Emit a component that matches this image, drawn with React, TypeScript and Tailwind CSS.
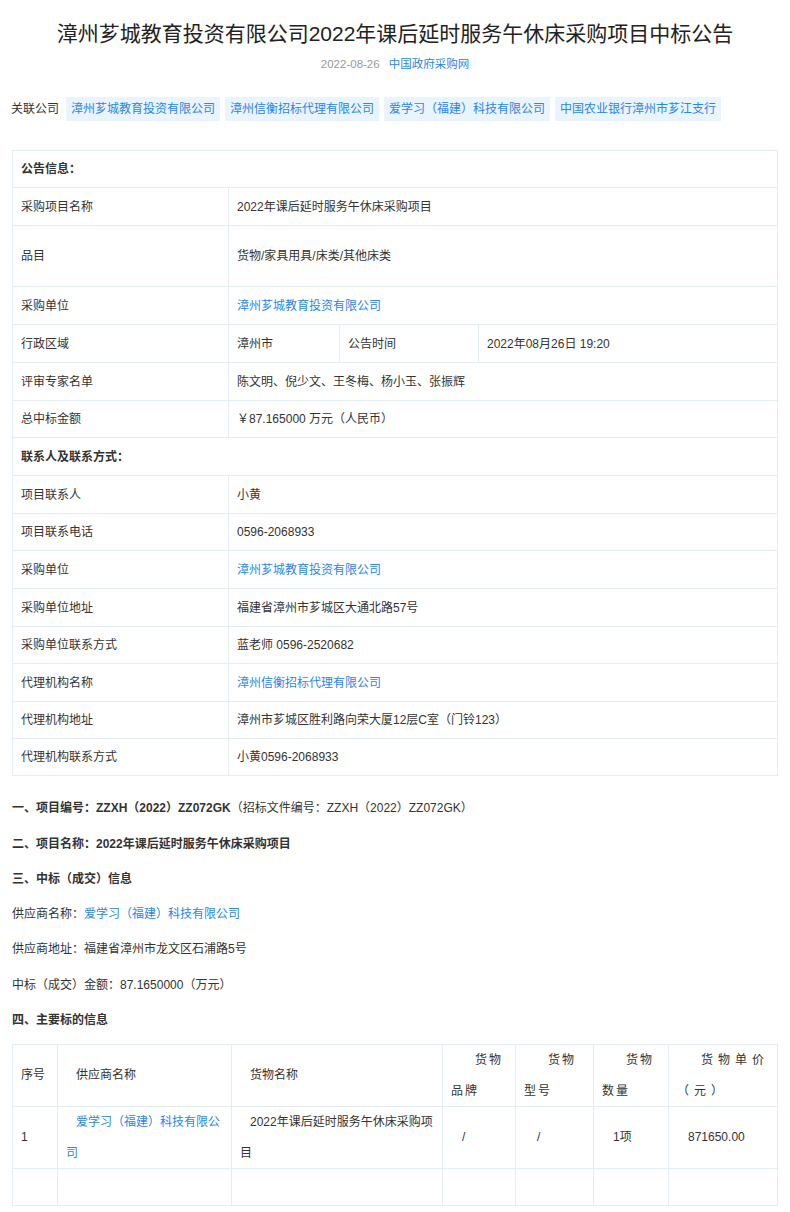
import React from "react";

const L = "text-[#2a86e8]";
const B = "border-[#e4eef2]";

function Row({ a, b, h = "h-[38px]", link = false }: { a: string; b: string; h?: string; link?: boolean }) {
  return (
    <div className={`flex ${h} border-t ${B}`}>
      <div className={`w-[216px] shrink-0 border-r ${B} flex items-center pl-[8px]`}>{a}</div>
      <div className={`flex-1 flex items-center pl-[8px] ${link ? L : ""}`}>{b}</div>
    </div>
  );
}

export default function App() {
  const font = { fontFamily: '"Liberation Sans","Noto Sans CJK SC",sans-serif' };
  const cols = ["w-[45px]", "w-[174px]", "w-[211px]", "w-[73px]", "w-[78px]", "w-[75px]", "flex-1"];
  return (
    <div className="w-[790px] bg-white text-[12px] text-[#333]" style={font}>
      <h1 className="text-[21px] text-[#222] text-center pt-[20px] leading-[28px]">漳州芗城教育投资有限公司2022年课后延时服务午休床采购项目中标公告</h1>
      <div className="text-center mt-[8px] text-[11.5px]">
        <span className="text-[#999]">2022-08-26</span>
        <span className={`ml-[9px] ${L}`}>中国政府采购网</span>
      </div>
      <div className="flex items-center mt-[24px] pl-[11px] gap-[5px]">
        <span className="mr-[2px]">关联公司</span>
        {["漳州芗城教育投资有限公司", "漳州信衡招标代理有限公司", "爱学习（福建）科技有限公司", "中国农业银行漳州市芗江支行"].map(t => (
          <span key={t} className={`bg-[#e9f4fd] ${L} h-[24px] px-[5px] flex items-center`}>{t}</span>
        ))}
      </div>
      <div className={`mx-[12px] mt-[29px] border ${B} border-t-0`}>
        <div className={`h-[37px] border-t ${B} flex items-center pl-[8px] font-bold`}>公告信息：</div>
        <Row a="采购项目名称" b="2022年课后延时服务午休床采购项目" />
        <Row a="品目" b="货物/家具用具/床类/其他床类" h="h-[61px]" />
        <Row a="采购单位" b="漳州芗城教育投资有限公司" link />
        <div className={`flex h-[38px] border-t ${B}`}>
          <div className={`w-[216px] shrink-0 border-r ${B} flex items-center pl-[8px]`}>行政区域</div>
          <div className={`w-[111px] border-r ${B} flex items-center pl-[8px]`}>漳州市</div>
          <div className={`w-[139px] border-r ${B} flex items-center pl-[8px]`}>公告时间</div>
          <div className="flex-1 flex items-center pl-[8px]">2022年08月26日 19:20</div>
        </div>
        <Row a="评审专家名单" b="陈文明、倪少文、王冬梅、杨小玉、张振辉" />
        <Row a="总中标金额" b="￥87.165000 万元（人民币）" h="h-[37px]" />
        <div className={`h-[38px] border-t ${B} flex items-center pl-[8px] font-bold`}>联系人及联系方式：</div>
        <Row a="项目联系人" b="小黄" />
        <Row a="项目联系电话" b="0596-2068933" h="h-[37px]" />
        <Row a="采购单位" b="漳州芗城教育投资有限公司" link />
        <Row a="采购单位地址" b="福建省漳州市芗城区大通北路57号" />
        <Row a="采购单位联系方式" b="蓝老师 0596-2520682" h="h-[37px]" />
        <Row a="代理机构名称" b="漳州信衡招标代理有限公司" link />
        <Row a="代理机构地址" b="漳州市芗城区胜利路向荣大厦12层C室（门铃123）" h="h-[37px]" />
        <Row a="代理机构联系方式" b="小黄0596-2068933" h="h-[37px]" />
      </div>
      <div className="pl-[12px] mt-[15px] leading-[35.3px]">
        <div><b>一、项目编号：ZZXH（2022）ZZ072GK</b>（招标文件编号：ZZXH（2022）ZZ072GK）</div>
        <div className="font-bold">二、项目名称：2022年课后延时服务午休床采购项目</div>
        <div className="font-bold">三、中标（成交）信息</div>
        <div>供应商名称：<span className={L}>爱学习（福建）科技有限公司</span></div>
        <div>供应商地址：福建省漳州市龙文区石浦路5号</div>
        <div>中标（成交）金额：87.1650000（万元）</div>
        <div className="font-bold">四、主要标的信息</div>
      </div>
      <div className={`mx-[12px] mt-[6px] border ${B} leading-[31px]`}>
        <div className="flex h-[61px]">
          {["序号", "供应商名称", "货物名称", "货物品牌", "货物型号", "货物数量", "货物单价（元）"].map((t, i) => (
            <div key={t} className={`${cols[i]} shrink-0 ${i < 6 ? `border-r ${B}` : ""} flex ${i < 3 ? "items-center" : "items-start"} pl-[8px] pr-[4px]`}>
              {i === 0 ? t : i < 3 ? <span className="pl-[10px]">{t}</span> : i < 6 ? <span className="indent-[24px] tracking-[2px]">{t}</span> : <span className="indent-[24px] tracking-[5px]">{t}</span>}
            </div>
          ))}
        </div>
        <div className={`flex h-[62px] border-t ${B}`}>
          <div className={`${cols[0]} shrink-0 border-r ${B} flex items-center pl-[8px]`}>1</div>
          <div className={`${cols[1]} shrink-0 border-r ${B} flex items-center pl-[8px] pr-[2px] ${L}`}><span className="indent-[10px]">爱学习（福建）科技有限公司</span></div>
          <div className={`${cols[2]} shrink-0 border-r ${B} flex items-center pl-[8px] pr-[4px]`}><span className="indent-[10px]">2022年课后延时服务午休床采购项目</span></div>
          <div className={`${cols[3]} shrink-0 border-r ${B} flex items-center pl-[19px]`}>/</div>
          <div className={`${cols[4]} shrink-0 border-r ${B} flex items-center pl-[21px]`}>/</div>
          <div className={`${cols[5]} shrink-0 border-r ${B} flex items-center pl-[19px]`}>1项</div>
          <div className="flex-1 flex items-center pl-[19px]">871650.00</div>
        </div>
        <div className={`flex h-[37px] border-t ${B}`}>
          {cols.map((c, i) => <div key={i} className={`${c} shrink-0 ${i < 6 ? `border-r ${B}` : ""}`} />)}
        </div>
      </div>
    </div>
  );
}
